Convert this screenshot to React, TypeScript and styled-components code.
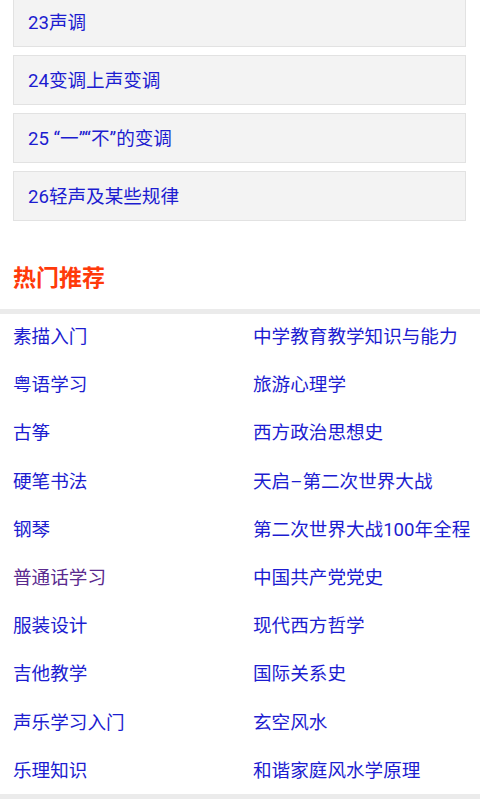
import React from 'react';
import styled, { createGlobalStyle } from 'styled-components';

const LESSONS = ['23声调', '24变调上声变调', '25 “一”“不”的变调', '26轻声及某些规律'];

const HOT = [
  ['素描入门', '中学教育教学知识与能力'],
  ['粤语学习', '旅游心理学'],
  ['古筝', '西方政治思想史'],
  ['硬笔书法', '天启–第二次世界大战'],
  ['钢琴', '第二次世界大战100年全程'],
  ['普通话学习', '中国共产党党史'],
  ['服装设计', '现代西方哲学'],
  ['吉他教学', '国际关系史'],
  ['声乐学习入门', '玄空风水'],
  ['乐理知识', '和谐家庭风水学原理'],
];

const VISITED = '普通话学习';

const GlobalStyle = createGlobalStyle`
  html, body {
    margin: 0;
    padding: 0;
    background: #fff;
    font-family: Roboto, "Noto Sans CJK SC", sans-serif;
  }
`;

export default function App() {
  return (
    <>
      <GlobalStyle />
      <Page>
        <LessonList>
          {LESSONS.map((title) => (
            <LessonItem key={title}>{title}</LessonItem>
          ))}
        </LessonList>
        <SectionHeader>热门推荐</SectionHeader>
        <HotGrid>
          {HOT.flat().map((name) => (
            <HotLink key={name} visited={name === VISITED}>
              {name}
            </HotLink>
          ))}
        </HotGrid>
      </Page>
    </>
  );
}

const Page = styled.div`
  display: flex;
  flex-direction: column;
  margin-top: -3px;
  width: 480px;
  overflow: hidden;
`;

const LessonList = styled.div`
  display: flex;
  flex-direction: column;
  gap: 8px;
  padding: 0 14px 0 13px;
`;

const LessonItem = styled.div`
  box-sizing: border-box;
  height: 50px;
  display: flex;
  align-items: center;
  padding: 0 14px 4px;
  background: #f3f3f3;
  border: 1px solid #e2e2e2;
  color: #1c1cd0;
  font-size: 18.6px;
`;

const SectionHeader = styled.h3`
  margin: 0;
  height: 93px;
  box-sizing: border-box;
  display: flex;
  align-items: center;
  padding: 22px 13px 0;
  color: #ff3a0a;
  font-size: 23px;
  font-weight: bold;
  border-bottom: 5px solid #ebebeb;
`;

const HotGrid = styled.div`
  display: grid;
  grid-template-columns: 240px 240px;
  grid-auto-rows: 48.2px;
  margin-top: -2px;
  border-bottom: 5px solid #ebebeb;
`;

const HotLink = styled.div<{ visited?: boolean }>`
  display: flex;
  align-items: center;
  padding: 0 0 3px 13px;
  white-space: nowrap;
  color: ${(p) => (p.visited ? '#5a2a8e' : '#1c1cd0')};
  font-size: 18.6px;
`;
